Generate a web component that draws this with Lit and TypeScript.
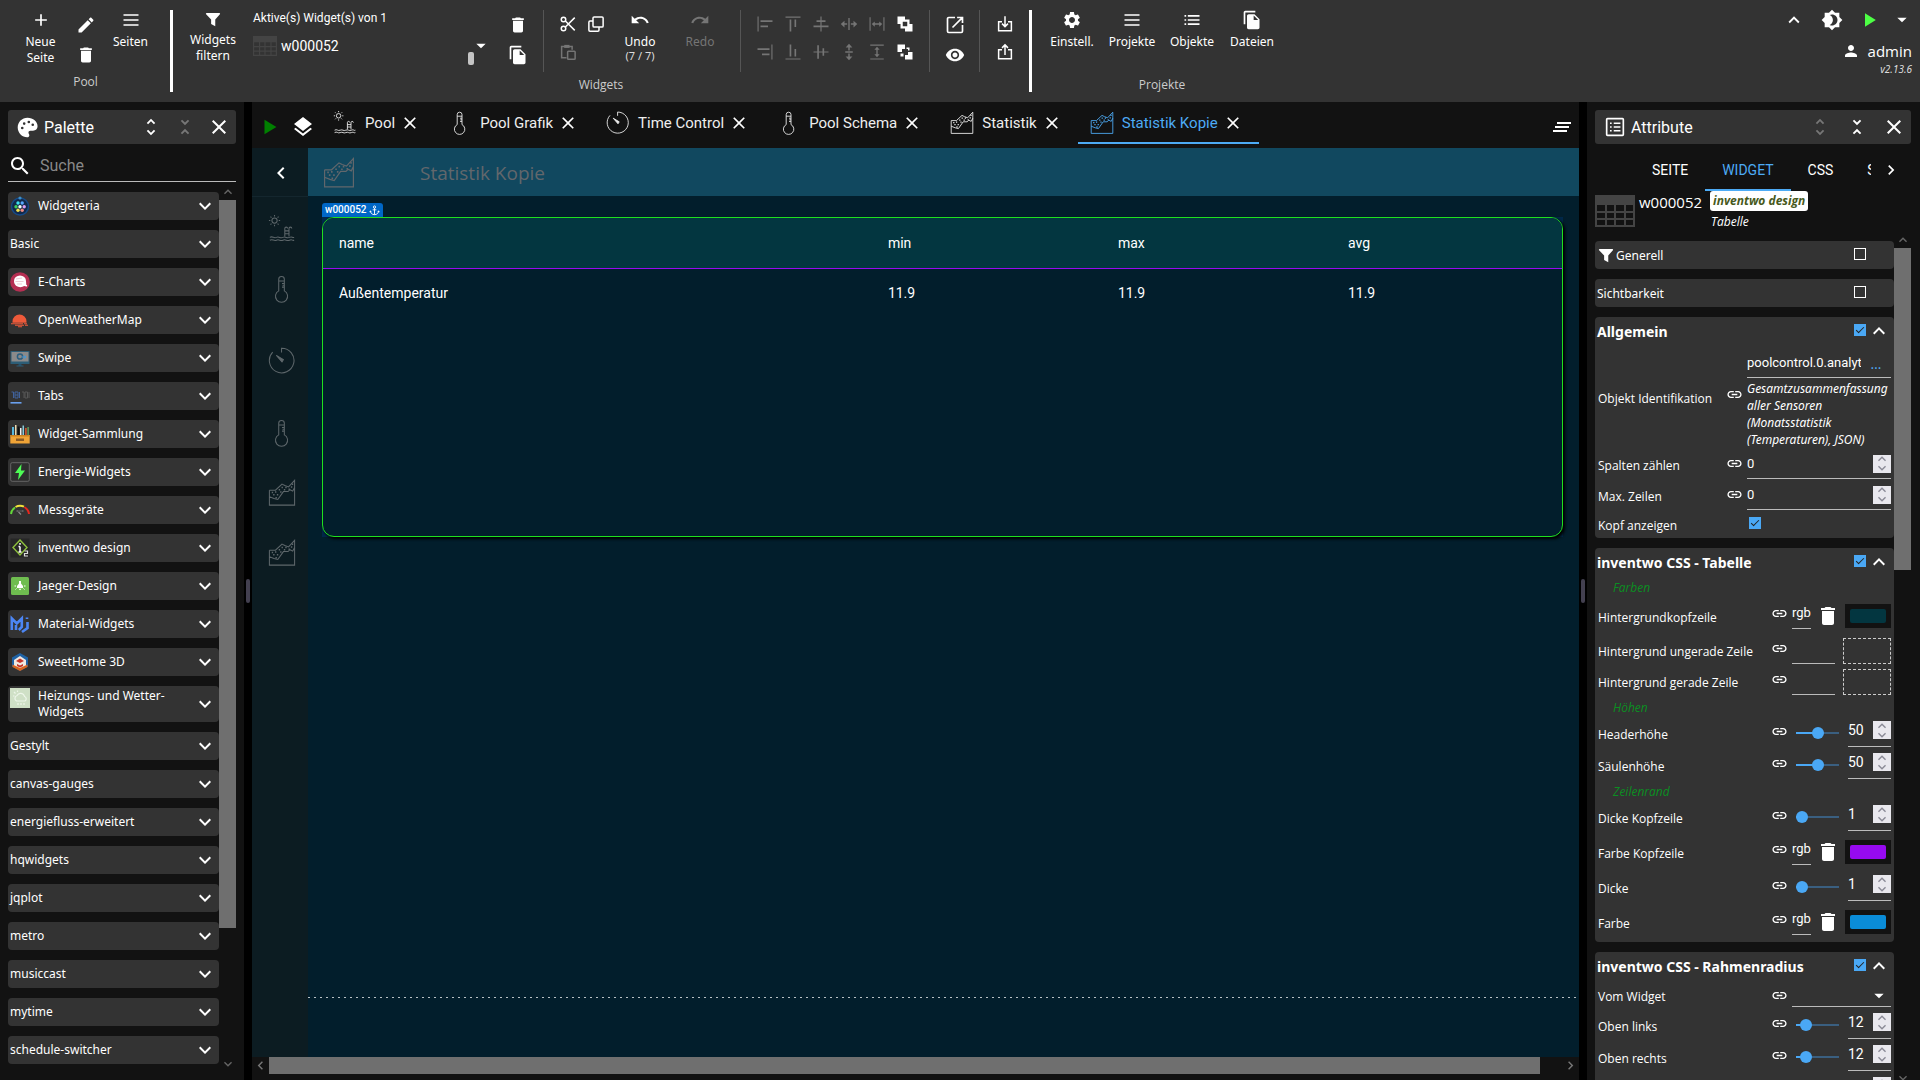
import { LitElement, html, css, svg, nothing, TemplateResult, SVGTemplateResult } from "lit";
import { customElement, property, state } from "lit/decorators.js";
import { classMap } from "lit/directives/class-map.js";

/* ---------- icon set (24 x 24 grid) ---------- */

const PATHS: Record<string, string> = {
  add: "M19 13h-6v6h-2v-6H5v-2h6V5h2v6h6v2z",
  edit: "M3 17.25V21h3.75L17.81 9.94l-3.75-3.75L3 17.25zM20.71 7.04c.39-.39.39-1.02 0-1.41l-2.34-2.34c-.39-.39-1.02-.39-1.41 0l-1.83 1.83 3.75 3.75 1.83-1.83z",
  trash: "M6 19c0 1.1.9 2 2 2h8c1.1 0 2-.9 2-2V7H6v12zM19 4h-3.5l-1-1h-5l-1 1H5v2h14V4z",
  menu: "M3 19h18v-2H3v2zm0-6h18v-2H3v2zm0-8v2h18V5H3z",
  filter: "M3.500 4h17c.9 0 1.300 1 .7 1.700L15 12.500V21.500l-5.500-3V12.500L2.800 5.700C2.200 5 2.600 4 3.500 4z",
  files: "M16 1H4c-1.100 0-2 .9-2 2v14h2V3h12V1zm-1 4l6 6v10c0 1.100-.9 2-2 2H7.990C6.890 23 6 22.100 6 21l.01-14c0-1.100.89-2 1.990-2h7zm-1 7h5.500L14 6.500V12z",
  undo: "M12.500 8c-2.650 0-5.050.99-6.900 2.600L2 7v9h9l-3.620-3.620c1.390-1.160 3.160-1.880 5.120-1.880 3.540 0 6.550 2.310 7.600 5.500l2.370-.78C21.080 11.030 17.150 8 12.500 8z",
  redo: "M18.400 10.600C16.550 8.990 14.150 8 11.500 8c-4.650 0-8.580 3.030-9.960 7.220L3.900 16c1.050-3.190 4.050-5.500 7.600-5.500 1.950 0 3.730.72 5.120 1.880L13 16h9V7l-3.600 3.600z",
  cog: "M19.14 12.94c.04-.3.06-.61.06-.94 0-.32-.02-.64-.07-.94l2.03-1.58c.18-.14.23-.41.12-.61l-1.92-3.32c-.12-.22-.37-.29-.59-.22l-2.39.96c-.5-.38-1.03-.7-1.62-.94l-.36-2.54c-.04-.24-.24-.41-.48-.41h-3.84c-.24 0-.43.17-.47.41l-.36 2.54c-.59.24-1.13.57-1.62.94l-2.39-.96c-.22-.08-.47 0-.59.22L2.74 8.87c-.12.21-.08.47.12.61l2.03 1.58c-.05.3-.09.63-.09.94s.02.64.07.94l-2.03 1.58c-.18.14-.23.41-.12.61l1.92 3.32c.12.22.37.29.59.22l2.39-.96c.5.38 1.03.7 1.62.94l.36 2.54c.05.24.24.41.48.41h3.84c.24 0 .44-.17.47-.41l.36-2.54c.59-.24 1.13-.56 1.62-.94l2.39.96c.22.08.47 0 .59-.22l1.92-3.32c.12-.22.07-.47-.12-.61l-2.01-1.58zM12 15.6c-1.98 0-3.6-1.62-3.6-3.6s1.62-3.6 3.6-3.6 3.6 1.62 3.6 3.6-1.62 3.6-3.6 3.6z",
  list: "M3 13h2v-2H3v2zm0 5h2v-2H3v2zm0-10h2V6H3v2zm4 5h14v-2H7v2zm0 5h14v-2H7v2zM7 6v2h14V6H7z",
  up: "M12 8l-6 6 1.410 1.410L12 10.830l4.590 4.580L18 14z",
  down: "M16.590 8.590L12 13.170 7.410 8.590 6 10l6 6 6-6z",
  left: "M15.410 7.410L14 6l-6 6 6 6 1.410-1.410L10.830 12z",
  right: "M10 6L8.590 7.410 13.170 12l-4.580 4.590L10 18l6-6z",
  unfoldMore: "M12 5.830L15.170 9l1.410-1.410L12 3 7.410 7.590 8.830 9 12 5.830zm0 12.340L8.830 15l-1.410 1.410L12 21l4.590-4.590L15.170 15 12 18.170z",
  unfoldLess: "M7.410 18.590L8.830 20 12 16.830 15.170 20l1.410-1.410L12 14l-4.590 4.590zm9.180-13.180L15.170 4 12 7.170 8.830 4 7.410 5.410 12 10l4.590-4.590z",
  close: "M19 6.410L17.590 5 12 10.590 6.410 5 5 6.410 10.590 12 5 17.590 6.410 19 12 13.410 17.590 19 19 17.590 13.410 12z",
  search: "M15.500 14h-.79l-.28-.27C15.410 12.590 16 11.110 16 9.500 16 5.910 13.090 3 9.500 3S3 5.910 3 9.500 5.910 16 9.500 16c1.610 0 3.090-.59 4.230-1.570l.27.28v.79l5 4.990L20.490 19l-4.990-5zm-6 0C7.010 14 5 11.990 5 9.500S7.010 5 9.500 5 14 7.010 14 9.500 11.990 14 9.500 14z",
  layers: "M11.990 18.540l-7.370-5.730L3 14.070l9 7 9-7-1.630-1.270-7.380 5.740zM12 16l7.360-5.730L21 9l-9-7-9 7 1.630 1.270L12 16z",
  theme: "M20 8.690V4h-4.690L12 .69 8.690 4H4v4.690L.69 12 4 15.310V20h4.690L12 23.310 15.310 20H20v-4.690L23.310 12 20 8.690zM12 18c-.89 0-1.740-.2-2.500-.55C11.560 16.500 13 14.420 13 12s-1.440-4.500-3.500-5.450C10.260 6.200 11.110 6 12 6c3.310 0 6 2.690 6 6s-2.690 6-6 6z",
  eye: "M12 4.500C7 4.500 2.730 7.610 1 12c1.730 4.390 6 7.500 11 7.500s9.270-3.110 11-7.500c-1.730-4.390-6-7.500-11-7.500zM12 17c-2.760 0-5-2.240-5-5s2.240-5 5-5 5 2.240 5 5-2.240 5-5 5zm0-8c-1.660 0-3 1.340-3 3s1.340 3 3 3 3-1.340 3-3-1.340-3-3-3z",
  person: "M12 12c2.210 0 4-1.790 4-4s-1.790-4-4-4-4 1.790-4 4 1.790 4 4 4zm0 2c-2.670 0-8 1.340-8 4v2h16v-2c0-2.660-5.330-4-8-4z",
  link: "M3.900 12c0-1.710 1.390-3.100 3.100-3.100h4V7H7c-2.760 0-5 2.240-5 5s2.240 5 5 5h4v-1.900H7c-1.710 0-3.100-1.390-3.100-3.100zM8 13h8v-2H8v2zm9-6h-4v1.900h4c1.710 0 3.100 1.390 3.100 3.100s-1.390 3.100-3.100 3.100h-4V17h4c2.760 0 5-2.240 5-5s-2.240-5-5-5z",
  play: "M6 4v16l13-8z",
  caret: "M4 8l8 8 8-8z",
  palette: "M12 .8C5.700.8.800 5.800.8 12S6 23.200 11.500 23.200c1.700 0 2.600-1 2.600-2.400 0-1.400-1-1.800-1-3.200 0-1.200.9-2 2.200-2H18.300c3.200 0 5.200-2 5.200-5C23.500 5 18.500.8 12 .8zM6 14a1.500 1.500 0 110-3 1.500 1.500 0 010 3zm2.200-5a1.500 1.500 0 110-3 1.500 1.500 0 010 3zM13.500 7.200a1.500 1.500 0 110-3 1.500 1.500 0 010 3zM18 10.300a1.500 1.500 0 110-3 1.500 1.500 0 010 3z",
  clearAll: "M5 13h14v-2H5v2zm-2 4h14v-2H3v2zM7 7v2h14V7H7z",
  alignLeft: "M2 2h1.500v20H2zM6 7h16v2.200H6zM6 14h10v2.200H6z",
  alignRight: "M20.500 2H22v20h-1.500zM2 7h16v2.200H2zM8 14h10v2.200H8z",
  alignTop: "M2 2h20v1.500H2zM7.500 6h2.200v16H7.500zM14 6h2.200v10H14z",
  alignBottom: "M2 20.500h20V22H2zM7.500 2h2.200v16H7.500zM14 8h2.200v10H14z",
  alignCenter: "M11.200 2h1.600v5H18v2.200h-5.200V14H22v2.200h-9.200V22h-1.600v-5.800H2V14h9.200V9.200H6V7h5.200z",
  alignMiddle: "M2 11.200h5V3h2.200v8.200H14V7h2.200v4.200H22v1.600h-5.800V17H14v-4.200H9.200V21H7v-8.200H2z",
  spanH: "M1 12l5-4.500V11h3.500v2H6v3.500zM23 12l-5-4.500V11h-3.500v2H18v3.500zM11.100 4h1.800v16h-1.800z",
  spanV: "M12 1l4.500 5H13v4h-2V6H7.500zM12 23l4.500-5H13v-4h-2v4H7.500zM7 11.100h10v1.800H7z",
  sameW: "M2 3h1.500v18H2zM20.500 3H22v18h-1.500zM5 12l4-3.500v2.600h6V8.500l4 3.500-4 3.500v-2.600H9v2.600z",
  sameH: "M3 2h18v1.500H3zM3 20.500h18V22H3zM12 5l3.500 4h-2.600v6h2.600L12 19l-3.500-4h2.600V9H8.500z",
  front: "M2 2h10v4H6v6H2zM6 6h12v12H6zM9 9v6h6V9zM18 12h4v10H12v-4h6z",
  back: "M2 2h10v6H8v4H2zM16 12h6v10H12v-6h4zM14 6h4v4h-4zM6 14h4v4H6zM14 8v2h2V8z",
};

const icon = (name: string, size = 20): TemplateResult => html`
  <svg class="ico" width=${size} height=${size} viewBox="0 0 24 24" aria-hidden="true">
    <path fill="currentColor" fill-rule="evenodd" d=${PATHS[name]}></path>
  </svg>`;

const line = (body: SVGTemplateResult, size = 20, box = 24, width = 2): TemplateResult => html`
  <svg class="ico" width=${size} height=${size} viewBox="0 0 ${box} ${box}" fill="none" stroke="currentColor"
    stroke-width=${width} aria-hidden="true">${body}</svg>`;

const CUT = svg`<circle cx="6" cy="6" r="3"></circle><circle cx="6" cy="18" r="3"></circle><path d="M8.500 8L21 20.500M8.500 16L21 3.500"></path>`;
const DUPLICATE = svg`<rect x="8" y="2.500" width="13.500" height="13.500" rx="1.500"></rect><path d="M8 8H4a1.500 1.500 0 00-1.500 1.500V20A1.500 1.500 0 004 21.500h10.500A1.500 1.500 0 0016 20v-4"></path>`;
const PASTE = svg`<path d="M10 19.500H3.500V4.500H17.500V9M7 5h7"></path><path d="M7 4.500h7" stroke-width="4"></path><rect x="11.500" y="11" width="10" height="10.500" rx="1"></rect>`;
const OPEN = svg`<path d="M12 3H4.500A1.500 1.500 0 003 4.500v15A1.500 1.500 0 004.500 21h15a1.500 1.500 0 001.500-1.500V12M14.500 3H21v6.500M20.500 3.500L9 15"></path>`;
const IMPORT = svg`<path d="M8 9H3.500v12h17V9H16M12 1.500V15M8 11.500l4 4 4-4"></path>`;
const EXPORT = svg`<path d="M8 9H3.500v12h17V9H16M12 16V3M8 6.500l4-4 4 4"></path>`;
const LISTBOX = svg`<rect x="2" y="2" width="20" height="20" rx="1"></rect><path d="M6 7.500h2M10.500 7.500h8M6 12h2M10.500 12h8M6 16.500h2M10.500 16.500h8"></path>`;
const ANCHOR = svg`<circle cx="12" cy="4.500" r="2.500"></circle><path d="M12 7v14M8 10.500h8M3 13c0 5 4 8 9 8s9-3 9-8M1.500 15.500L3 13l2.500 2M22.500 15.500L21 13l-2.500 2"></path>`;

/* ---------- line drawings for the project views ---------- */

const VIEW_ART: Record<string, SVGTemplateResult> = {
  pool: svg`<circle cx="7" cy="6" r="2.800"></circle><path d="M7 0v1.500M7 10.500V12M1 6h1.500M11.500 6H13M2.700 1.700l1 1M10.300 9.300l1 1M2.700 10.300l1-1M10.300 2.700l1-1"></path><path d="M18 23v-8.500c0-2 3-2 3 0M22.500 23v-8.500c0-2 3-2 3 0M18 17h4.500M18 20h4.500"></path><path d="M2 24c3-2 4 1.500 7 0s4 1.500 7 0 4 1.500 7 0 3 1 5 0M2 27c3-2 4 1.500 7 0s4 1.500 7 0 4 1.500 7 0 3 1 5 0"></path>`,
  thermo: svg`<path d="M11.500 17V4.500a3 3 0 016 0V17a6.500 6.500 0 11-6 0zM11.500 6.500h6M15 9h2.500M15.500 11h2M15 13h2.500"></path>`,
  timer: svg`<path d="M14.500 6V1.300A13.200 13.200 0 115 5.500"></path><path d="M9 9l7.500 4.500-1.500 2.500z" fill="currentColor"></path>`,
  chart: svg`<path d="M1.500 12v16h27V1.500l-6.500 7-4-1.500-3-1.500-7 6.500-6.500 0M1.500 19l5 2 4 1 6-8.500 5 0 2-2 3 1.500 2-4"></path><path d="M4 14.500h1.500M7.500 14h1.500M5.500 17h1.500M9.500 17h1.500M8 20h1.500M11.500 11.500H13M13 14h1.500M14.500 9H16M17 11.500h1.500M18.500 9H20M22 11h1.500M24.500 8.500H26M25.500 5.500H27" stroke-width="1.600"></path>`,
};

const viewArt = (kind: string, size: number): TemplateResult => html`
  <svg class="ico" width=${size} height=${size} viewBox="0 0 30 30" fill="none" stroke="currentColor"
    stroke-width="1.100" aria-hidden="true">${VIEW_ART[kind]}</svg>`;

const tableArt = (w: number, h: number): TemplateResult => html`
  <svg class="ico" width=${w} height=${h} viewBox="0 0 40 32" preserveAspectRatio="none" aria-hidden="true">
    <path fill="#444" fill-rule="evenodd" d="M0 0h40v32H0zM2 10v6h8v-6zm10 0v6h7v-6zm9 0v6h8v-6zm10 0v6h7v-6zM2 18v5h8v-5zm10 0v5h7v-5zm9 0v5h8v-5zm10 0v5h7v-5zM2 25v5h8v-5zm10 0v5h7v-5zm9 0v5h8v-5zm10 0v5h7v-5z"></path>
  </svg>`;

/* ---------- adapter logos in the palette ---------- */

const LOGOS: Record<string, SVGTemplateResult> = {
  widgeteria: svg`<circle cx="10" cy="10.500" r="8.500" fill="#12294a" stroke="#164a86" stroke-width="1.500"></circle><circle cx="10" cy="2" r="1.600" fill="#3d8fc9"></circle><circle cx="8" cy="7" r="1.700" fill="#3ce0f0"></circle><circle cx="12.200" cy="7" r="1.700" fill="#58a8ff"></circle><circle cx="6" cy="10.700" r="1.700" fill="#3ecf5c"></circle><circle cx="10" cy="10.700" r="1.700" fill="#f0fff8"></circle><circle cx="14.200" cy="10.700" r="1.700" fill="#dca0f5"></circle><circle cx="8" cy="14.300" r="1.700" fill="#f4e04a"></circle><circle cx="12.200" cy="14.300" r="1.700" fill="#f08a80"></circle>`,
  echarts: svg`<circle cx="10" cy="10" r="9.800" fill="#b52f52"></circle><path d="M4 9a6 5.500 0 0112 0c0 1 .5 3 0 3.500 1 0 1.500 1 1 2-1 .3-2-.5-3-.5-3 2.500-10 1-10-5z" fill="#fff"></path><path d="M6 7l6-1M5.500 9.500h8M7 12l5 0" stroke="#e3a9b8" stroke-width=".6"></path>`,
  weather: svg`<path d="M2.500 11.500a7 7 0 1114 0v1.200h-14zM1 13.300h12v1H1zM14 13.300h3v1h-3zM5 14.800h9v1H5zM15 14.800h3v1h-3zM8 16.300h4v1H8z" fill="#ee5a3a"></path>`,
  swipe: svg`<rect x=".5" y="3" width="19" height="13" fill="#2c5d76"></rect><rect x="1.500" y="4" width="17" height="9.500" fill="#8a8a8a"></rect><circle cx="10" cy="8.500" r="2.600" fill="none" stroke="#2b5f80" stroke-width="1.500"></circle><path d="M12 9h4l-1.500-1.500M16 9l-1.500 1.500" stroke="#3d9be0" fill="none"></path><path d="M8.500 16h3v2h-3z" fill="#24506a"></path><path d="M6.500 17.500h7v1h-7z" fill="#2c5d76"></path>`,
  tabs: svg`<path d="M1.500 6h2v6M5 6h3v6H5zM5 9h3M9.500 6v6" stroke="#41629c" fill="none"></path><path d="M12 6h2v6M15 6h2.500v6H15zM19 6v6" stroke="#575757" fill="none"></path><path d="M.5 16h11v1.600H.5z" fill="#6aa0ee"></path>`,
  collection: svg`<path d="M2 3h2v9H2z" fill="#58b7dd"></path><path d="M5 1h1.500v11H5z" fill="#e9d9b0"></path><path d="M7.500 2.500h2V12h-2z" fill="#101010"></path><path d="M10 4h1.500v8H10z" fill="#f2f2f2"></path><path d="M12.500 1.500h1.500V12h-1.500z" fill="#87c9d8"></path><path d="M15 4h1.800v8H15z" fill="#c2512e"></path><path d="M17.500 3h1.200v9h-1.200z" fill="#67b56b"></path><path d="M.3 11h19.400v8.500H.3z" fill="#f0a437"></path><path d="M.3 11h19.400v1.500H.3z" fill="#cc8220"></path><path d="M6 14.500h8V17H6z" fill="#8a5a24"></path>`,
  energy: svg`<rect x=".7" y=".7" width="18.600" height="18.600" rx="1.500" fill="#2e2e2e" stroke="#666"></rect><path d="M11.500 2L5 11h4l-1 7 7-9.500h-4z" fill="#4dfb55"></path>`,
  gauges: svg`<path d="M1 14a9.300 9.300 0 014-6.500" stroke="#64d93a" stroke-width="2" fill="none"></path><path d="M5.500 7a9.300 9.300 0 018.500-.3" stroke="#f0e23a" stroke-width="2" fill="none"></path><path d="M14.300 7A9.300 9.300 0 0119 14" stroke="#e6271e" stroke-width="2" fill="none"></path><path d="M6.500 11h2M9.500 11h1M11.500 11h2M8.500 12l2.500 2.500" stroke="#8c8c8c" stroke-width="1.200"></path>`,
  inventwo: svg`<rect x=".5" y=".5" width="19" height="19" fill="#262626"></rect><path d="M10 2l7 7.500-7 7.500-7-7.500z" fill="none" stroke="#8fc13e" stroke-width="1.400"></path><path d="M10 5v1.800M10 8.500V14M8.500 8.500H10M8.500 14h3" stroke="#fff" stroke-width="1.500"></path><path d="M14.500 13h3v2.500h-3V18h3.500" stroke="#ddd" fill="none" stroke-width="1.200"></path>`,
  jaeger: svg`<rect x="1" y="1" width="18" height="18" rx="1.500" fill="#6fbd50"></rect><path d="M9 5h2v2.500l2 2.500v2H7v-2l2-2.500zM8.500 12.800h3L10 14.300z" fill="#fff"></path><path d="M4.500 10H6M14 10h1.500M5.500 13.500l1-1M14.500 13.500l-1-1" stroke="#fff"></path>`,
  material: svg`<path d="M1.800 16V4.500l5 5 5-5V13l-3 3M6 11v5M17 3.500V5M17.500 8v6l-5.500 4" fill="none" stroke="#4c86f4" stroke-width="2.600"></path>`,
  sweethome: svg`<path d="M10 1l8 4.500v9L10 19l-8-4.500v-9z" fill="#1f62a5"></path><path d="M4 8l6-4 6 4v6l-6 3.500L4 14z" fill="#f0e8e0"></path><path d="M2.500 12.500L10 16l7.500-3.500v2.500L10 19l-7.500-4z" fill="#d8651f"></path><path d="M6 9l4-2.500L14 9l-4 2zM7 12l3 1.500 3-1.500v2l-3 1.500L7 14z" fill="#c7342a"></path>`,
  heating: svg`<rect width="20" height="20" fill="#cfe0c6"></rect><path d="M6.500 13a3 3 0 01.5-5.500 4 4 0 017.500 1 2.500 2.500 0 01.5 4.500zM8 15v2M11 15v2M14 15v2M4 4l1.500 1.500M3 8h1.500M7.500 2.500V4" stroke="#eef6ea" fill="none" stroke-width="1.200"></path>`,
};

/* ---------- data ---------- */

interface PaletteEntry { name: string; logo?: string; }

const PALETTE: PaletteEntry[] = [
  { name: "Widgeteria", logo: "widgeteria" },
  { name: "Basic" },
  { name: "E-Charts", logo: "echarts" },
  { name: "OpenWeatherMap", logo: "weather" },
  { name: "Swipe", logo: "swipe" },
  { name: "Tabs", logo: "tabs" },
  { name: "Widget-Sammlung", logo: "collection" },
  { name: "Energie-Widgets", logo: "energy" },
  { name: "Messgeräte", logo: "gauges" },
  { name: "inventwo design", logo: "inventwo" },
  { name: "Jaeger-Design", logo: "jaeger" },
  { name: "Material-Widgets", logo: "material" },
  { name: "SweetHome 3D", logo: "sweethome" },
  { name: "Heizungs- und Wetter-Widgets", logo: "heating" },
  { name: "Gestylt" },
  { name: "canvas-gauges" },
  { name: "energiefluss-erweitert" },
  { name: "hqwidgets" },
  { name: "jqplot" },
  { name: "metro" },
  { name: "musiccast" },
  { name: "mytime" },
  { name: "schedule-switcher" },
];

const VIEWS = [
  { name: "Pool", art: "pool" },
  { name: "Pool Grafik", art: "thermo" },
  { name: "Time Control", art: "timer" },
  { name: "Pool Schema", art: "thermo" },
  { name: "Statistik", art: "chart" },
  { name: "Statistik Kopie", art: "chart" },
];

const ALIGN = [
  ["alignLeft", "alignTop", "alignCenter", "spanH", "sameW", "front"],
  ["alignRight", "alignBottom", "alignMiddle", "spanV", "sameH", "back"],
];

type Row =
  | { kind: "caption"; label: string }
  | { kind: "object"; label: string; value: string; note: string }
  | { kind: "number"; label: string; value: number }
  | { kind: "check"; label: string; value: boolean }
  | { kind: "color"; label: string; value?: string }
  | { kind: "slider"; label: string; value: number }
  | { kind: "select"; label: string };

interface Section { title: string; open: boolean; checked: boolean; filter?: boolean; rows: Row[]; }

const SECTIONS: Section[] = [
  { title: "Generell", open: false, checked: false, filter: true, rows: [] },
  { title: "Sichtbarkeit", open: false, checked: false, rows: [] },
  {
    title: "Allgemein", open: true, checked: true, rows: [
      { kind: "object", label: "Objekt Identifikation", value: "poolcontrol.0.analytics", note: "Gesamtzusammenfassung aller Sensoren (Monatsstatistik (Temperaturen), JSON)" },
      { kind: "number", label: "Spalten zählen", value: 0 },
      { kind: "number", label: "Max. Zeilen", value: 0 },
      { kind: "check", label: "Kopf anzeigen", value: true },
    ],
  },
  {
    title: "inventwo CSS - Tabelle", open: true, checked: true, rows: [
      { kind: "caption", label: "Farben" },
      { kind: "color", label: "Hintergrundkopfzeile", value: "#033640" },
      { kind: "color", label: "Hintergrund ungerade Zeile" },
      { kind: "color", label: "Hintergrund gerade Zeile" },
      { kind: "caption", label: "Höhen" },
      { kind: "slider", label: "Headerhöhe", value: 50 },
      { kind: "slider", label: "Säulenhöhe", value: 50 },
      { kind: "caption", label: "Zeilenrand" },
      { kind: "slider", label: "Dicke Kopfzeile", value: 1 },
      { kind: "color", label: "Farbe Kopfzeile", value: "#960af0" },
      { kind: "slider", label: "Dicke", value: 1 },
      { kind: "color", label: "Farbe", value: "#0a8cd8" },
    ],
  },
  {
    title: "inventwo CSS - Rahmenradius", open: true, checked: true, rows: [
      { kind: "select", label: "Vom Widget" },
      { kind: "slider", label: "Oben links", value: 12 },
      { kind: "slider", label: "Oben rechts", value: 12 },
      { kind: "slider", label: "Unten links", value: 12 },
    ],
  },
];

const base = css`
  :host, *, *::before, *::after { box-sizing: border-box; }
  button, input, select { font: inherit; color: inherit; background: none; border: 0; padding: 0; margin: 0; border-radius: 0; outline: 0; }
  button { display: inline-flex; align-items: center; justify-content: center; cursor: pointer; }
  .ico { display: block; flex: none; }
  .panel-head { display: flex; align-items: center; height: 34px; border-radius: 3px; background: #333; font-size: 16px; }
  .panel-head h2 { font: inherit; margin: 0; flex: 1; }
  .dim { color: #777; }
  .vbar { width: 17px; flex: none; display: flex; flex-direction: column; align-items: center; color: #666; }
  .vbar i { width: 17px; background: #6f6f6f; }
  .check { appearance: none; width: 12px; height: 12px; border: 1px solid #fff; flex: none; display: grid; place-items: center; }
  .check:checked { background: #4aa8f5; border-color: #4aa8f5; }
  .check:checked::before { content: ""; width: 8px; height: 4px; margin-top: -2px; border: solid #222; border-width: 0 0 1px 1px; transform: rotate(-45deg); }
`;

/* ---------- top toolbar ---------- */

@customElement("vis-toolbar")
export class VisToolbar extends LitElement {
  static styles = [base, css`
    :host { display: flex; background: #333; height: 102px; padding: 10px 5px 0 18px; font-family: "Noto Sans", "Segoe UI", sans-serif; font-size: 12px; color: #fff; }
    .group { display: flex; flex-direction: column; align-items: center; }
    .tools { display: flex; min-height: 60px; align-items: flex-start; }
    .tools.tall { min-height: 62px; }
    .label { color: #ccc; line-height: 16px; padding-top: 4px; font-family: "Open Sans", "Segoe UI", sans-serif; }
    .tall + .label { padding-top: 5px; }
    .bar { width: 3px; height: 82px; background: #fff; flex: none; margin: 0 10px; }
    .bar.first { margin-left: 17px; }
    .rule { width: 1px; height: 62px; background: #555; flex: none; margin: 0 10px; }
    .rule.loose { margin: 0 11px 0 10px; }
    .text { flex-direction: column; width: 60px; gap: 4px; line-height: 16px; justify-content: flex-start; }
    .text.narrow { width: 45px; }
    .text small { display: block; font-size: 11px; line-height: 11px; color: #ddd; }
    .off { color: #757575; }
    .cells { display: grid; grid-auto-rows: 28px; grid-auto-columns: 28px; }
    .cells.wide { grid-auto-rows: 30px; }
    .cells.narrow { grid-auto-columns: 45px; }
    .cells.six { grid-template-columns: repeat(6, 28px); }
    .cells.two { grid-template-columns: repeat(2, 28px); }
    .cells.side { margin-left: 16px; margin-right: 1px; }
    .active { width: 245px; font-family: Roboto, sans-serif; font-size: 12px; padding-left: 10px; }
    .active p { margin: 0; line-height: 16px; }
    .picked { display: flex; align-items: flex-start; padding-top: 10px; font-size: 14px; line-height: 20px; }
    .picked span { flex: 1; padding-left: 4px; }
    .thumb { width: 6px; height: 13px; border-radius: 2px; background: #c4c4c4; margin-top: 16px; }
    .drop { height: 20px; align-items: center; }
    .user { margin-left: auto; display: flex; flex-direction: column; align-items: flex-end; }
    .quick { display: flex; height: 20px; align-items: center; }
    .quick button { width: 38px; height: 20px; }
    .quick .last { width: 26px; }
    .play { color: #4dff45; }
    .name { display: flex; align-items: center; gap: 8px; font-size: 15px; line-height: 24px; padding: 9px 3px 0 0; font-family: "Open Sans", "Segoe UI", sans-serif; }
    .version { font-size: 10px; font-style: italic; line-height: 12px; color: #ddd; padding-right: 3px; }
  `];

  render() {
    return html`
      <div class="group">
        <div class="tools">
          <button class="text narrow">${icon("add")}<span>Neue<br>Seite</span></button>
          <div class="cells wide narrow">
            <button aria-label="Bearbeiten">${icon("edit")}</button>
            <button aria-label="Löschen">${icon("trash")}</button>
          </div>
          <button class="text narrow">${icon("menu")}<span>Seiten</span></button>
        </div>
        <div class="label">Pool</div>
      </div>
      <div class="bar first"></div>
      <div class="group">
        <div class="tools tall">
          <button class="text">${icon("filter", 18)}<span>Widgets<br>filtern</span></button>
          <div class="active">
            <p>Aktive(s) Widget(s) von 1</p>
            <div class="picked">${tableArt(24, 20)}<span>w000052</span><i class="thumb"></i><button class="drop" aria-label="Auswahl">${icon("caret", 14)}</button></div>
          </div>
          <div class="cells wide side">
            <button aria-label="Widget löschen">${icon("trash")}</button>
            <button aria-label="Widget klonen">${icon("files")}</button>
          </div>
          <div class="rule"></div>
          <div class="cells two">
            <button aria-label="Ausschneiden">${line(CUT, 18)}</button>
            <button aria-label="Kopieren">${line(DUPLICATE, 18)}</button>
            <button class="off" aria-label="Einfügen">${line(PASTE, 18)}</button>
          </div>
          <button class="text">${icon("undo")}<span>Undo<small>(7 / 7)</small></span></button>
          <button class="text off">${icon("redo")}<span>Redo</span></button>
          <div class="rule"></div>
          <div class="cells six">
            ${ALIGN.flat().map((name) => html`
              <button class=${classMap({ off: name !== "front" && name !== "back" })} aria-label=${name}>${icon(name, 18)}</button>`)}
          </div>
          <div class="rule loose"></div>
          <div class="cells wide">
            <button aria-label="Öffnen">${line(OPEN)}</button>
            <button aria-label="Ansicht">${icon("eye")}</button>
          </div>
          <div class="rule loose"></div>
          <div class="cells">
            <button aria-label="Importieren">${line(IMPORT, 18)}</button>
            <button aria-label="Exportieren">${line(EXPORT, 18)}</button>
          </div>
        </div>
        <div class="label">Widgets</div>
      </div>
      <div class="bar"></div>
      <div class="group">
        <div class="tools tall">
          <button class="text">${icon("cog")}<span>Einstell.</span></button>
          <button class="text">${icon("menu")}<span>Projekte</span></button>
          <button class="text">${icon("list")}<span>Objekte</span></button>
          <button class="text">${icon("files")}<span>Dateien</span></button>
        </div>
        <div class="label">Projekte</div>
      </div>
      <div class="user">
        <div class="quick">
          <button aria-label="Einklappen">${icon("up", 22)}</button>
          <button aria-label="Farbschema">${icon("theme", 22)}</button>
          <button class="play" aria-label="Starten">${icon("play", 20)}</button>
          <button class="last" aria-label="Mehr">${icon("caret", 14)}</button>
        </div>
        <div class="name">${icon("person", 18)}<span>admin</span></div>
        <div class="version">v2.13.6</div>
      </div>`;
  }
}

/* ---------- widget palette ---------- */

@customElement("vis-palette")
export class VisPalette extends LitElement {
  static styles = [base, css`
    :host { display: flex; flex-direction: column; padding: 8px 8px 6px; background: #121212; min-height: 0; font-family: Roboto, sans-serif; color: #fff; }
    .panel-head { padding: 0 0 0 9px; flex: none; }
    .panel-head h2 { padding-left: 6px; }
    .panel-head button { width: 34px; height: 34px; }
    .search { display: flex; align-items: center; height: 38px; border-bottom: 1px solid #bbb; flex: none; padding: 6px 0 0; gap: 8px; }
    .search input { flex: 1; min-width: 0; font-size: 16px; }
    .search input::placeholder { color: #888; opacity: 1; }
    .body { display: flex; flex: 1; min-height: 0; }
    .entries { flex: 1; min-width: 0; display: flex; flex-direction: column; gap: 10px; padding-top: 10px; overflow: hidden; font-family: "Noto Sans", "Segoe UI", sans-serif; font-size: 12px; line-height: 16px; }
    .entry { flex: none; min-height: 28px; border-radius: 4px; background: #333; padding: 2px; text-align: left; gap: 8px; }
    .entry span { flex: 1; }
    .entry > svg:first-child { align-self: flex-start; margin-top: 2px; }
    .two-line > svg:first-child { margin-top: 0; }
    .vbar { padding: 2px 0; }
    .vbar i { flex: 0 0 82%; }
    .vbar svg:last-child { margin-top: auto; }
  `];

  render() {
    return html`
      <header class="panel-head">
        ${icon("palette", 21)}<h2>Palette</h2>
        <button aria-label="Alle aufklappen">${icon("unfoldMore", 22)}</button>
        <button class="dim" aria-label="Alle zuklappen">${icon("unfoldLess", 22)}</button>
        <button aria-label="Schließen">${icon("close", 24)}</button>
      </header>
      <label class="search">${icon("search", 24)}<input type="search" placeholder="Suche" aria-label="Suche"></label>
      <div class="body">
        <div class="entries">
          ${PALETTE.map((entry) => html`
            <button class=${classMap({ entry: true, "two-line": entry.logo === "heating" })}>
              ${entry.logo ? html`<svg class="ico" width="20" height="20" viewBox="0 0 20 20" aria-hidden="true">${LOGOS[entry.logo]}</svg>` : nothing}
              <span>${entry.name}</span>${icon("down", 24)}
            </button>`)}
        </div>
        <div class="vbar" aria-hidden="true">${icon("up", 16)}<i></i>${icon("down", 16)}</div>
      </div>`;
  }
}

/* ---------- editor workspace ---------- */

@customElement("vis-workspace")
export class VisWorkspace extends LitElement {
  @state() private selected = "Statistik Kopie";

  static styles = [base, css`
    :host { display: flex; flex-direction: column; min-width: 0; min-height: 0; background: #121212; font-family: Roboto, sans-serif; font-size: 14px; color: #fff; }
    .views { display: flex; height: 46px; flex: none; padding: 0 5px 0 8px; }
    .run, .stack, .all { width: 20px; height: 46px; padding-top: 3px; }
    .run { color: #008000; }
    .stack { width: 24px; margin: 0 6px 0 11px; }
    .all { margin-left: auto; width: 24px; }
    .view { display: flex; align-items: center; height: 42px; padding: 2px 16px 0 12px; border-bottom: 2px solid transparent; font-size: 15px; }
    .view.current { border-color: #4dabf5; }
    .view .name { gap: 8px; color: #eee; }
    .view.current .name { color: #4dabf5; }
    .view .shut { width: 25px; padding-left: 5px; color: #fff; }
    .stage { flex: 1; min-height: 0; display: grid; grid-template-columns: 56px 1fr; background: #021e2c; }
    .rail { background: #0c1c22; color: #5e676b; display: flex; flex-direction: column; }
    .back { height: 49px; border-bottom: 1px solid #14262e; color: #fff; padding: 2px 0 0 2px; }
    .rail nav { display: flex; flex-direction: column; padding: 2px 0 0 4px; }
    .rail a { height: 60px; display: grid; place-items: center; color: inherit; }
    .rail a.timer { height: 84px; }
    .canvas { display: flex; flex-direction: column; min-width: 0; }
    .banner { height: 48px; background: #11485f; color: #62676c; display: flex; align-items: center; gap: 65px; padding: 2px 15px 0; font-family: "Open Sans", "Segoe UI", sans-serif; font-size: 19px; }
    .surface { flex: 1; display: flex; flex-direction: column; }
    .free { height: 802px; flex: none; background: repeating-linear-gradient(to right, #b9c1c5 0 2px, transparent 2px 6px) bottom / 100% 1px no-repeat; padding: 7px 16px 0 14px; display: flex; flex-direction: column; align-items: flex-start; }
    .tag { display: flex; align-items: center; gap: 2px; height: 14px; padding: 0 3px; border-radius: 3px 3px 0 0; background: #0067c6; font: 500 10px/14px Roboto, sans-serif; }
    .widget { align-self: stretch; background: #00284a; }
    .frame { height: 320px; border: 1px solid #1fe01f; border-radius: 12px; overflow: hidden; background: #021e2c; box-shadow: 2px 2px 3px #000; }
    table { width: 100%; table-layout: fixed; border-collapse: collapse; }
    th, td { height: 50px; padding: 0 16px; text-align: left; font-weight: 400; }
    th { background: #033640; border-bottom: 1px solid #960af0; }
    .c1 { width: 44.3%; }
    .hbar { display: flex; height: 17px; flex: none; align-items: center; color: #777; margin-bottom: 6px; padding-right: 17px; }
    .hbar i { flex: 0 0 97%; height: 17px; background: #6f6f6f; }
    .hbar svg:last-child { margin-left: auto; margin-right: -17px; }
  `];

  render() {
    return html`
      <div class="views">
        <button class="run" aria-label="Vorschau">${icon("play", 22)}</button>
        <button class="stack" aria-label="Ebenen">${icon("layers", 24)}</button>
        ${VIEWS.map((view) => html`
          <div class=${classMap({ view: true, current: view.name === this.selected })}>
            <button class="name" @click=${() => (this.selected = view.name)}>${viewArt(view.art, 24)}${view.name}</button>
            <button class="shut" aria-label="${view.name} schließen">${icon("close", 20)}</button>
          </div>`)}
        <button class="all" aria-label="Alle Ansichten">${icon("clearAll", 24)}</button>
      </div>
      <div class="stage">
        <aside class="rail">
          <button class="back" aria-label="Zurück">${icon("left", 24)}</button>
          <nav>
            ${VIEWS.map((view) => html`<a href="#" class=${view.art} aria-label=${view.name}>${viewArt(view.art, 28)}</a>`)}
          </nav>
        </aside>
        <main class="canvas">
          <div class="banner">${viewArt("chart", 32)}<span>Statistik Kopie</span></div>
          <div class="surface">
            <div class="free">
              <div class="tag">w000052 ${line(ANCHOR, 11, 24, 2)}</div>
              <div class="widget"><div class="frame">
                <table>
                  <colgroup><col class="c1"><col><col><col></colgroup>
                  <thead><tr><th>name</th><th>min</th><th>max</th><th>avg</th></tr></thead>
                  <tbody><tr><td>Außentemperatur</td><td>11.9</td><td>11.9</td><td>11.9</td></tr></tbody>
                </table>
              </div></div>
            </div>
          </div>
        </main>
      </div>
      <div class="hbar" aria-hidden="true">${icon("left", 17)}<i></i>${icon("right", 17)}</div>`;
  }
}

/* ---------- attribute panel ---------- */

@customElement("vis-attributes")
export class VisAttributes extends LitElement {
  @property({ attribute: false }) sections: Section[] = SECTIONS;

  static styles = [base, css`
    :host { display: flex; flex-direction: column; padding: 8px 9px 0 8px; background: #121212; min-height: 0; font-family: "Open Sans", "Segoe UI", sans-serif; color: #fff; font-size: 12px; }
    .panel-head { font-family: Roboto, sans-serif; padding: 0 5px 0 10px; flex: none; }
    .panel-head h2 { padding-left: 6px; }
    .panel-head button { width: 24px; height: 34px; margin-left: 13px; }
    .tabs { display: flex; flex: none; height: 47px; padding: 6px 0 0 40px; font-family: Roboto, sans-serif; font-size: 14px; }
    .tabs .scroll { display: flex; flex: 1; overflow: hidden; }
    .tabs button { flex: none; padding: 0 17px; border-bottom: 2px solid transparent; }
    .tabs .current { color: #4dabf5; border-color: #4dabf5; }
    .tabs .more { width: 40px; padding: 0; }
    .about { display: grid; grid-template-columns: 40px auto 1fr; column-gap: 4px; flex: none; height: 40px; }
    .about svg { margin-top: 4px; }
    .about .id { font-size: 15px; line-height: 22px; padding-right: 4px; }
    .about .badge { display: block; background: #fff; color: #47591c; border-radius: 3px; font: italic 700 12px/20px "Open Sans", sans-serif; padding: 0 3px; width: max-content; }
    .about em { display: block; font-size: 12px; line-height: 22px; padding-left: 1px; }
    .body { display: flex; flex: 1; min-height: 0; }
    .list { flex: 1; min-width: 0; overflow: hidden; padding-top: 10px; display: flex; flex-direction: column; gap: 10px; }
    .card { flex: none; background: #333; border-radius: 4px; padding: 0 3px 0 2px; }
    .card > header { height: 28px; display: flex; align-items: center; font-family: "Noto Sans", "Segoe UI", sans-serif; font-size: 12px; }
    .card.open > header { height: 30px; font-weight: 700; font-size: 14px; padding-bottom: 2px; }
    .card h3 { font: inherit; margin: 0; flex: 1; }
    .card header > svg:first-child { margin-right: 1px; }
    .card header .check { margin-right: 25px; margin-top: -2px; }
    .card.open header .check { margin-right: 1px; }
    .row { display: grid; grid-template-columns: 1fr auto; column-gap: 5px; align-items: center; padding-left: 1px; height: 32px; }
    .row > label { white-space: nowrap; grid-column: 1; }
    .row .field { grid-column: 2; display: grid; grid-template-columns: 14px 99px; column-gap: 5px; height: 26px; }
    .row .field.wide { grid-template-columns: 14px 144px; }
    .row .mark { margin-top: 2px; margin-left: -2px; }
    .caption { height: 20px; line-height: 20px; padding-left: 16px; font-size: 12px; font-style: italic; color: #0b8f22; }
    .row.number { height: 31px; }
    .row.check-row { height: 26px; }
    .row.object { height: 103px; }
    .row.object .field { height: auto; align-items: start; }
    .object .mark { margin-top: 36px; }
    .row.color { height: 38px; }
    .row.color.empty { height: 31px; }
    .row.color .field { margin-bottom: 2px; }
    .row.select { height: 28px; }
    .row.select .field { height: 22px; }
    .under { border-bottom: 1px solid #bbb; display: flex; align-items: flex-start; min-width: 0; }
    .under input { flex: 1; min-width: 0; width: 0; height: 18px; line-height: 18px; appearance: textfield; font-family: Roboto, sans-serif; font-size: 13px; }
    .under input::-webkit-inner-spin-button { display: none; }
    .number .under { padding-top: 2px; }
    .small input { font-size: 14px; }
    .step { width: 18px; height: 18px; background: #e9e8ee; color: #8a8a96; display: grid; flex: none; }
    .step button { height: 9px; overflow: hidden; }
    .object .under { height: 28px; padding-top: 4px; }
    .object .dots { color: #4dabf5; width: 30px; height: 20px; font-size: 14px; }
    .note { font-family: "Noto Sans", "Segoe UI", sans-serif; font-size: 12px; font-style: italic; line-height: 17px; margin: 2px -3px 0 0; }
    .boxed { align-self: center; margin: -4px 0 0 2px; }
    .slide { display: grid; grid-template-columns: 43px 43px; column-gap: 9px; padding-left: 4px; }
    .range { appearance: none; width: 43px; height: 24px; --fill: 0%; }
    .range::-webkit-slider-runnable-track { height: 2px; background: linear-gradient(to right, #4aa8f5 var(--fill), #3a5f80 var(--fill)); }
    .range::-webkit-slider-thumb { appearance: none; width: 12px; height: 12px; border-radius: 50%; background: #4aa8f5; margin-top: -5px; }
    .pick { display: flex; align-items: center; }
    .pick .rgb { width: 19px; height: 26px; border-bottom: 1px solid #bbb; font-family: Roboto, sans-serif; font-size: 13px; padding-bottom: 7px; }
    .pick .wipe { width: 34px; height: 24px; }
    .swatch { width: 46px; height: 24px; background: #121212; padding: 5px; }
    .swatch i { display: block; width: 100%; height: 14px; border-radius: 2px; }
    .pick .blank { width: 43px; height: 26px; border-bottom: 1px solid #bbb; margin-right: 8px; }
    .pick .drop { width: 48px; height: 26px; border: 1px dashed #ccc; }
    .under select { flex: 1; min-width: 0; appearance: none; height: 20px; }
    .under.pickone { display: grid; grid-template-columns: 1fr; align-items: center; }
    .pickone select, .pickone svg { grid-area: 1 / 1; }
    .pickone svg { justify-self: end; margin-right: 5px; pointer-events: none; }
    .vbar { padding: 1px 0 0; }
    .vbar i { flex: 0 0 38%; }
    .vbar svg:last-child { margin-top: auto; margin-bottom: -6px; }
  `];

  private stepper() {
    return html`<span class="step"><button aria-label="Erhöhen">${icon("up", 16)}</button><button aria-label="Verringern">${icon("down", 16)}</button></span>`;
  }

  private field(row: Row, id: string) {
    const mark = html`<span class="mark">${icon("link", 17)}</span>`;
    switch (row.kind) {
      case "object":
        return html`<div class="field wide">${mark}<div>
          <div class="under"><input id=${id} type="text" .value=${row.value}><button class="dots" aria-label="Auswählen">…</button></div>
          <div class="note">${row.note}</div></div></div>`;
      case "number":
        return html`<div class="field wide">${mark}<div class="under"><input id=${id} type="number" .value=${String(row.value)}>${this.stepper()}</div></div>`;
      case "check":
        return html`<div class="field wide"><span></span><input id=${id} class="check boxed" type="checkbox" .checked=${row.value}></div>`;
      case "slider": {
        const fill = Math.round((6 + (row.value / 100) * 31) / 0.43);
        return html`<div class="field">${mark}<div class="slide">
          <input class="range" type="range" min="0" max="100" .value=${String(row.value)} aria-label=${row.label} style="--fill:${fill}%">
          <div class="under small"><input id=${id} type="number" .value=${String(row.value)}>${this.stepper()}</div></div></div>`;
      }
      case "color":
        return row.value
          ? html`<div class="field">${mark}<div class="pick"><input id=${id} class="rgb" type="text" .value=${"rgb"}>
              <button class="wipe" aria-label="Farbe löschen">${icon("trash", 24)}</button>
              <button class="swatch" aria-label="Farbe wählen"><i style="background:${row.value}"></i></button></div></div>`
          : html`<div class="field">${mark}<div class="pick"><input id=${id} class="blank" type="text"><button class="drop" aria-label="Farbe wählen"></button></div></div>`;
      case "select":
        return html`<div class="field">${mark}<div class="under pickone"><select id=${id}><option></option></select>${icon("caret", 14)}</div></div>`;
      default:
        return nothing;
    }
  }

  private row(row: Row, id: string) {
    if (row.kind === "caption") return html`<div class="caption">${row.label}</div>`;
    const cls = { row: true, [row.kind === "check" ? "check-row" : row.kind]: true, empty: row.kind === "color" && !row.value };
    return html`<div class=${classMap(cls)}><label for=${id}>${row.label}</label>${this.field(row, id)}</div>`;
  }

  render() {
    return html`
      <header class="panel-head">
        ${line(LISTBOX, 20)}<h2>Attribute</h2>
        <button class="dim" aria-label="Alle aufklappen">${icon("unfoldMore", 22)}</button>
        <button aria-label="Alle zuklappen">${icon("unfoldLess", 22)}</button>
        <button aria-label="Schließen">${icon("close", 24)}</button>
      </header>
      <nav class="tabs">
        <div class="scroll">
          <button>SEITE</button><button class="current">WIDGET</button><button>CSS</button><button>SKRIPTE</button>
        </div>
        <button class="more" aria-label="Weiter">${icon("right", 20)}</button>
      </nav>
      <div class="about">
        ${tableArt(40, 32)}
        <span class="id">w000052</span>
        <div><span class="badge">inventwo design</span><em>Tabelle</em></div>
      </div>
      <div class="body">
        <div class="list">
          ${this.sections.map((section, s) => html`
            <section class=${classMap({ card: true, open: section.open })}>
              <header>
                ${section.filter ? icon("filter", 18) : nothing}
                <h3>${section.title}</h3>
                <input class="check" type="checkbox" aria-label=${section.title} .checked=${section.checked}>
                ${section.open ? icon("up", 24) : nothing}
              </header>
              ${section.rows.map((row, r) => this.row(row, `f${s}-${r}`))}
            </section>`)}
        </div>
        <div class="vbar" aria-hidden="true">${icon("up", 16)}<i></i>${icon("down", 16)}</div>
      </div>`;
  }
}

/* ---------- application shell ---------- */

@customElement("app-root")
export class AppRoot extends LitElement {
  static styles = css`
    :host { display: grid; grid-template-rows: auto minmax(0, 1fr); height: 100vh; overflow: hidden; background: #121212; }
    .columns { display: grid; grid-template-columns: 244px 8px minmax(0, 1fr) 8px 333px; min-height: 0; }
    .split { background: #000; display: grid; place-items: center; }
    .split i { width: 4px; height: 24px; border-radius: 2px; background: #434050; }
  `;

  render() {
    return html`
      <vis-toolbar></vis-toolbar>
      <div class="columns">
        <vis-palette></vis-palette>
        <div class="split"><i></i></div>
        <vis-workspace></vis-workspace>
        <div class="split"><i></i></div>
        <vis-attributes></vis-attributes>
      </div>`;
  }
}
